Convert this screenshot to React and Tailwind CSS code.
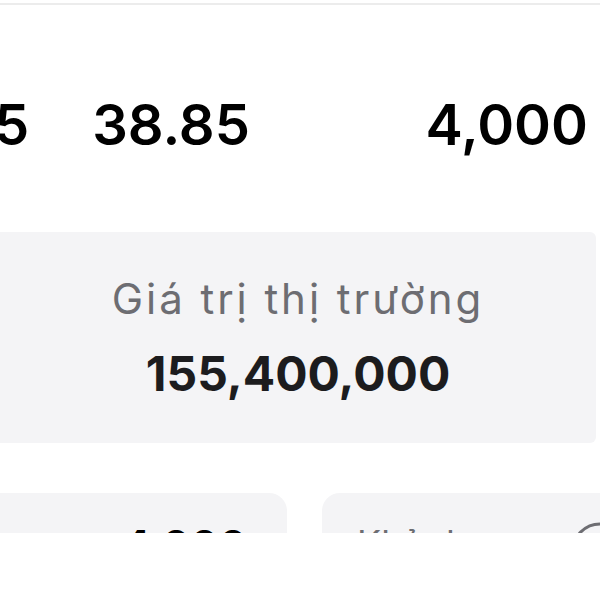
import React from 'react'

const font = { fontFamily: 'Inter, "Noto Sans", sans-serif' }

const App = () => {
    return (
        <div className="w-[600px] h-[600px] bg-white overflow-hidden" style={font}>
            <div className="h-[533px] overflow-hidden">
                <div className="pt-[3px]">
                    <div className="h-[2px] bg-[#ececec]" />
                </div>

                <div className="h-[227px] flex items-center">
                    <div className="flex w-full items-baseline text-[56px] font-semibold text-black leading-none pt-[12px]">
                        <span className="-ml-[6px]">5</span>
                        <span className="ml-[63px]">38.85</span>
                        <span className="ml-auto mr-[12px]">4,000</span>
                    </div>
                </div>

                <div className="w-[596px] h-[211px] bg-[#f4f4f6] flex flex-col items-center justify-center rounded-r-[6px]">
                    <p className="text-[42px] tracking-[0.07em] text-[#6d6d72] leading-none">Giá trị thị trường</p>
                    <p className="text-[48px] font-bold text-[#1c1c1e] leading-none mt-[30px]">155,400,000</p>
                </div>

                <div className="flex gap-[35px] mt-[50px]">
                    <div className="w-[287px] h-[120px] shrink-0 bg-[#f4f4f6] rounded-r-[18px] flex justify-end pr-[40px] pt-[32px]">
                        <span className="text-[42px] font-bold text-black leading-none">4,000</span>
                    </div>
                    <div className="w-[300px] h-[120px] shrink-0 bg-[#f4f4f6] rounded-l-[18px] flex pl-[35px] pt-[32px]">
                        <span className="text-[36px] text-[#6d6d72] leading-none">Khả dụng</span>
                        <svg width="60" height="60" viewBox="0 0 60 60" className="ml-auto mr-[-8px] -mt-[4px] shrink-0" fill="none" stroke="#6d6d72" strokeWidth="3">
                            <circle cx="30" cy="30" r="27" />
                        </svg>
                    </div>
                </div>
            </div>
        </div>
    )
}

export default App
